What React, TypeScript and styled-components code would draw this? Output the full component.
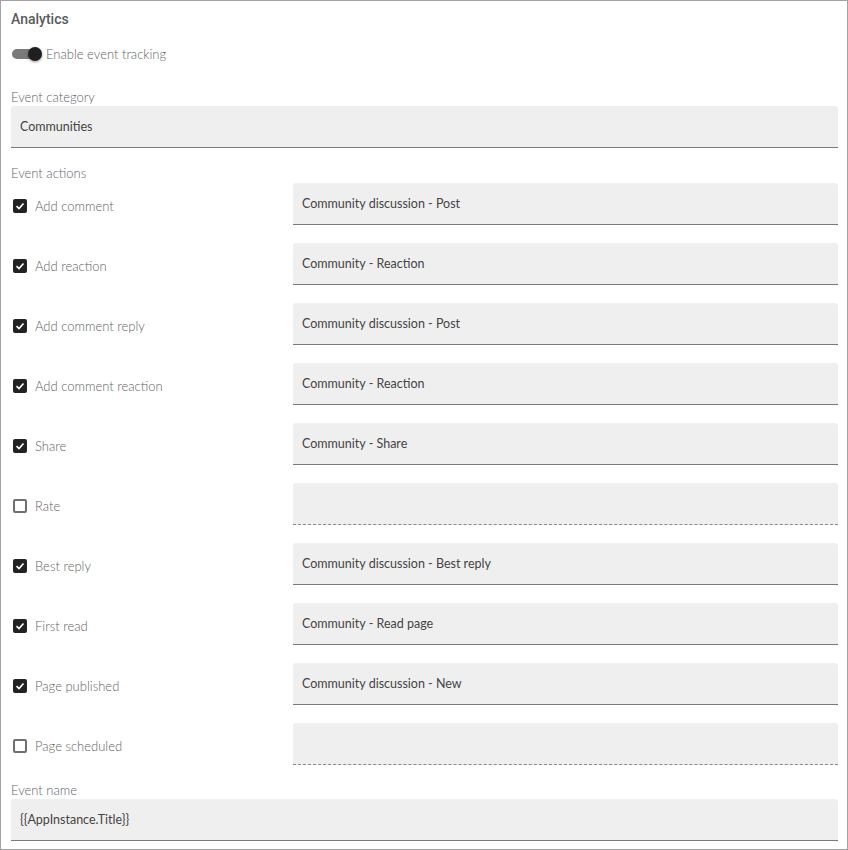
import React from "react";
import styled, { createGlobalStyle } from "styled-components";

const Global = createGlobalStyle`
  html, body { margin: 0; padding: 0; background: #fff; }
  body { font-family: "Lato", "Roboto", sans-serif; }
`;

const Frame = styled.div`
  width: 848px;
  height: 850px;
  box-sizing: border-box;
  border: 1px solid #a3a3a3;
  overflow: hidden;
  padding: 0 9px 0 10px;
  display: flex;
  flex-direction: column;
`;

const Title = styled.h2`
  margin: 9px 0 0 0;
  font-family: "Roboto", sans-serif;
  font-weight: 500;
  font-size: 14px;
  line-height: 18px;
  color: #5a5a5a;
`;

const ToggleRow = styled.div`
  display: flex;
  align-items: center;
  height: 20px;
  margin-top: 16px;
  gap: 6px;
`;

const Track = styled.div`
  position: relative;
  width: 28px;
  height: 20px;
  margin-left: 1px;
  &::before {
    content: "";
    position: absolute;
    left: 0;
    top: 5px;
    width: 26px;
    height: 10px;
    border-radius: 5px;
    background: #7a7a7a;
  }
  &::after {
    content: "";
    position: absolute;
    left: 16px;
    top: 3px;
    width: 14px;
    height: 14px;
    border-radius: 50%;
    background: #1f1f1f;
    box-shadow: 0 1px 3px rgba(0, 0, 0, 0.4);
  }
`;

const ToggleText = styled.span`
  font-size: 13px;
  font-weight: 300;
  color: #5f5f5f;
`;

const Label = styled.div<{ $top: number }>`
  margin-top: ${(p) => p.$top}px;
  font-size: 13px;
  font-weight: 300;
  line-height: 16px;
  color: #655f6d;
`;

const Field = styled.div<{ $empty?: boolean }>`
  box-sizing: border-box;
  height: 42px;
  background: #efefef;
  border-radius: 3px 3px 0 0;
  border-bottom: 1px ${(p) => (p.$empty ? "dashed #8a8a8a" : "solid #7a7a7a")};
  display: flex;
  align-items: center;
  padding: 0 9px 1px 9px;
  font-size: 12.5px;
  font-weight: 400;
  color: #444;
`;

const FullField = styled(Field)`
  margin-top: 1px;
`;

const Actions = styled.div`
  margin-top: 2px;
  display: flex;
  flex-direction: column;
  gap: 18px;
`;

const ActionRow = styled.div`
  display: grid;
  grid-template-columns: 282px 1fr;
  align-items: center;
`;

const CheckWrap = styled.div`
  display: flex;
  align-items: center;
  gap: 8px;
  padding-left: 2px;
  padding-top: 3px;
`;

const Box = styled.span<{ $on: boolean }>`
  box-sizing: border-box;
  width: 14px;
  height: 14px;
  border-radius: 2px;
  display: inline-flex;
  align-items: center;
  justify-content: center;
  background: ${(p) => (p.$on ? "#222" : "#fff")};
  border: 2px solid ${(p) => (p.$on ? "#222" : "#6f6f6f")};
`;

const CheckText = styled.span`
  font-size: 13px;
  font-weight: 300;
  color: #5f5f5f;
`;

const rows: [string, boolean, string][] = [
  ["Add comment", true, "Community discussion - Post"],
  ["Add reaction", true, "Community - Reaction"],
  ["Add comment reply", true, "Community discussion - Post"],
  ["Add comment reaction", true, "Community - Reaction"],
  ["Share", true, "Community - Share"],
  ["Rate", false, ""],
  ["Best reply", true, "Community discussion - Best reply"],
  ["First read", true, "Community - Read page"],
  ["Page published", true, "Community discussion - New"],
  ["Page scheduled", false, ""],
];

export default function App() {
  return (
    <>
      <Global />
      <Frame>
        <Title>Analytics</Title>
        <ToggleRow>
          <Track />
          <ToggleText>Enable event tracking</ToggleText>
        </ToggleRow>
        <Label $top={25}>Event category</Label>
        <FullField>Communities</FullField>
        <Label $top={17}>Event actions</Label>
        <Actions>
          {rows.map(([name, on, value]) => (
            <ActionRow key={name}>
              <CheckWrap>
                <Box $on={on}>
                  {on && (
                    <svg width="10" height="10" viewBox="0 0 10 10">
                      <path d="M1.5 5.2 L4 7.5 L8.5 2.5" fill="none" stroke="#fff" strokeWidth="1.6" />
                    </svg>
                  )}
                </Box>
                <CheckText>{name}</CheckText>
              </CheckWrap>
              <Field $empty={!value}>{value}</Field>
            </ActionRow>
          ))}
        </Actions>
        <Label $top={17}>Event name</Label>
        <FullField>{"{{AppInstance.Title}}"}</FullField>
      </Frame>
    </>
  );
}
